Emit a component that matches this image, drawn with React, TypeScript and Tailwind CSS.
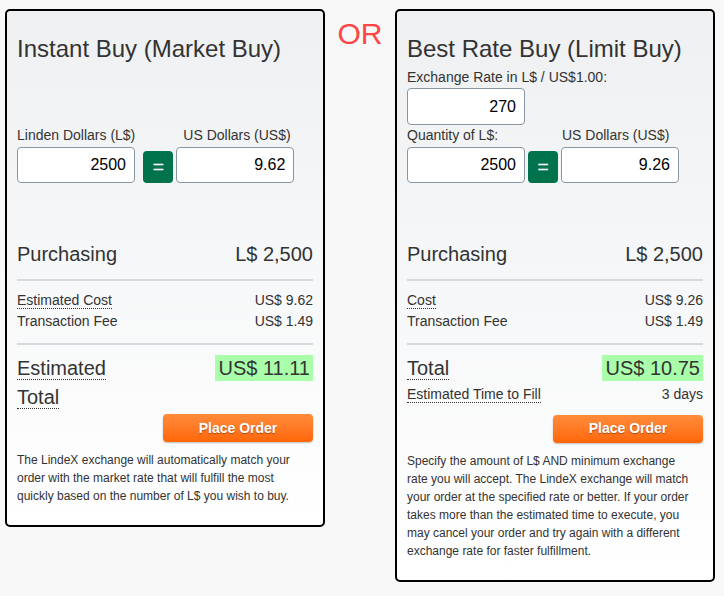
const font = "font-['Liberation_Sans',Arial,Helvetica,sans-serif]";

type FieldProps = { value: string; className?: string };

const Field = ({ value, className = "" }: FieldProps) => (
  <input
    readOnly
    value={value}
    className={`h-[36px] w-[118px] rounded-[4px] border border-[#8796a3] bg-white pr-[8px] text-right text-[16px] text-black outline-none ${className}`}
  />
);

const Equals = ({ className = "" }: { className?: string }) => (
  <div
    className={`flex h-[32px] w-[30px] items-center justify-center rounded-[4px] bg-[#00734d] text-[20px] leading-none text-white ${className}`}
  >
    =
  </div>
);

const Dotted = ({ children }: { children: React.ReactNode }) => (
  <span className="border-b border-dotted border-[#333]">{children}</span>
);

const Divider = ({ className = "" }: { className?: string }) => (
  <div className={`h-[2px] bg-[#d6dade] ${className}`} />
);

const PlaceOrder = ({ className = "" }: { className?: string }) => (
  <button className={`ml-auto flex h-[28px] w-[150px] items-center justify-center rounded-[4px] bg-gradient-to-b from-[#ff8c3a] to-[#ff6600] text-[14px] font-bold text-white shadow-[0_1px_2px_rgba(0,0,0,0.25)] [text-shadow:0_1px_1px_rgba(0,0,0,0.35)] ${className}`}>
    Place Order
  </button>
);

const Card = ({ children }: { children: React.ReactNode }) => (
  <div className="flex w-[320px] flex-col rounded-[5px] border-2 border-black bg-gradient-to-b from-[#eef0f2] to-white px-[10px] pt-[24px] pb-[20px] text-[#333]">
    {children}
  </div>
);

export default function App() {
  return (
    <div className={`flex min-h-screen items-start bg-[#f8f8f8] pt-[9px] pl-[5px] ${font}`}>
      {/* market buy */}
      <Card>
        <h2 className="text-[24px] leading-[28px]">Instant Buy (Market Buy)</h2>
        <div className="h-[62px]" />
        <div className="mt-[2px] flex items-end">
          <div className="flex flex-col">
            <label className="text-[14px] leading-[16px]">Linden Dollars (L$)</label>
            <Field value="2500" className="mt-[4px]" />
          </div>
          <Equals className="ml-[8px]" />
          <div className="ml-[3px] flex flex-col">
            <label className="pl-[7px] text-[14px] leading-[16px]">US Dollars (US$)</label>
            <Field value="9.62" className="mt-[4px]" />
          </div>
        </div>

        <div className="mt-[57px] flex justify-between text-[20px] leading-[28px]">
          <span>Purchasing</span>
          <span>L$ 2,500</span>
        </div>
        <Divider className="mt-[11px]" />
        <div className="mt-[9px] flex justify-between text-[14px] leading-[20px]">
          <span><Dotted>Estimated Cost</Dotted></span>
          <span>US$ 9.62</span>
        </div>
        <div className="mt-[1px] flex justify-between text-[14px] leading-[20px]">
          <span>Transaction Fee</span>
          <span>US$ 1.49</span>
        </div>
        <Divider className="mt-[12px]" />
        <div className="mt-[9px] flex items-start justify-between text-[20px] leading-[28.6px]">
          <div className="w-[120px]">
            <Dotted>Estimated Total</Dotted>
          </div>
          <div>
            <span className="bg-[#aaffaa] px-[3px] py-[2px]">US$ 11.11</span>
          </div>
        </div>
        <PlaceOrder className="mt-[3px]" />
        <p className="mt-[9px] pr-[10px] text-[12px] leading-[18px]">
          The LindeX exchange will automatically match your order with the market rate that will
          fulfill the most quickly based on the number of L$ you wish to buy.
        </p>
      </Card>

      <div className="mt-[10px] w-[70px] text-center text-[30px] leading-[30px] text-[#ff4545]">OR</div>

      {/* limit buy */}
      <Card>
        <h2 className="text-[24px] leading-[28px]">Best Rate Buy (Limit Buy)</h2>
        <label className="mt-[6px] text-[14px] leading-[16px]">Exchange Rate in L$ / US$1.00:</label>
        <Field value="270" className="mt-[3px] !h-[37px]" />
        <div className="mt-[2px] flex items-end">
          <div className="flex flex-col">
            <label className="text-[14px] leading-[16px]">Quantity of L$:</label>
            <Field value="2500" className="mt-[4px]" />
          </div>
          <Equals className="ml-[3px]" />
          <div className="ml-[3px] flex flex-col">
            <label className="pl-[1px] text-[14px] leading-[16px]">US Dollars (US$)</label>
            <Field value="9.26" className="mt-[4px]" />
          </div>
        </div>

        <div className="mt-[57px] flex justify-between text-[20px] leading-[28px]">
          <span>Purchasing</span>
          <span>L$ 2,500</span>
        </div>
        <Divider className="mt-[11px]" />
        <div className="mt-[9px] flex justify-between text-[14px] leading-[20px]">
          <span><Dotted>Cost</Dotted></span>
          <span>US$ 9.26</span>
        </div>
        <div className="mt-[1px] flex justify-between text-[14px] leading-[20px]">
          <span>Transaction Fee</span>
          <span>US$ 1.49</span>
        </div>
        <Divider className="mt-[12px]" />
        <div className="mt-[9px] flex items-start justify-between text-[20px] leading-[28.6px]">
          <div className="w-[120px]">
            <Dotted>Total</Dotted>
          </div>
          <div>
            <span className="bg-[#aaffaa] px-[3px] py-[2px]">US$ 10.75</span>
          </div>
        </div>
        <div className="mt-[1px] flex justify-between text-[14px] leading-[20px]">
          <span><Dotted>Estimated Time to Fill</Dotted></span>
          <span>3 days</span>
        </div>
        <PlaceOrder className="mt-[11px]" />
        <p className="mt-[9px] pr-[10px] text-[12px] leading-[18px]">
          Specify the amount of L$ AND minimum exchange rate you will accept. The LindeX exchange
          will match your order at the specified rate or better. If your order takes more than the
          estimated time to execute, you may cancel your order and try again with a different
          exchange rate for faster fulfillment.
        </p>
      </Card>
    </div>
  );
}
